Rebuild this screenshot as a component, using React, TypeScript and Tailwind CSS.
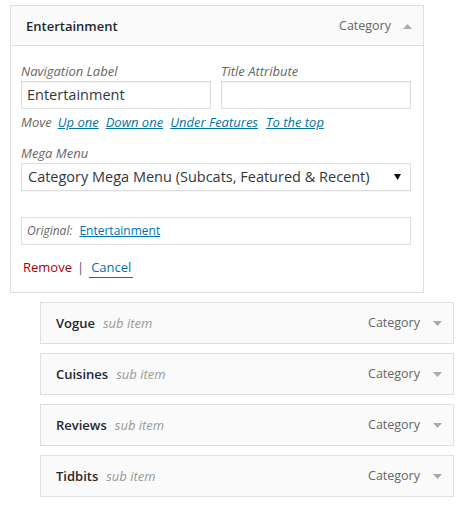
import React from "react";

const font = { fontFamily: '"Open Sans", "Noto Sans", sans-serif' };

function Arrow({ up }: { up?: boolean }) {
  return (
    <svg width="9" height="5" viewBox="0 0 9 5" className="shrink-0">
      {up ? <polygon points="0,5 9,5 4.5,0" fill="#aaaaaa" /> : <polygon points="0,0 9,0 4.5,5" fill="#aaaaaa" />}
    </svg>
  );
}

function SubItem({ title }: { title: string }) {
  return (
    <div className="ml-[40px] w-[414px] h-[42px] border border-[#dfdfdf] bg-[#fafafa] flex items-center pt-[1px] pl-[15px] pr-[10px]">
      <span className="text-[13px] font-semibold text-[#23282d]">{title}</span>
      <span className="ml-[8px] text-[13px] italic text-[#999]">sub item</span>
      <span className="ml-auto text-[12.5px] text-[#666]">Category</span>
      <span className="ml-[13px] mr-[1px]"><Arrow /></span>
    </div>
  );
}

export default function App() {
  return (
    <div style={font} className="w-[466px] h-[505px] bg-white pt-[5px]">
      <div className="ml-[10px] w-[414px] border border-[#dfdfdf] bg-white">
        <div className="h-[40px] bg-[#fafafa] border-b border-[#dfdfdf] flex items-center pt-[2px] pl-[15px] pr-[10px]">
          <span className="text-[13px] font-semibold text-[#23282d]">Entertainment</span>
          <span className="ml-auto text-[12.5px] text-[#666]">Category</span>
          <span className="ml-[12px] mr-[1px]"><Arrow up /></span>
        </div>
        <div className="pl-[10px] pr-[12px] pt-[15px] pb-[13px]">
          <div className="flex gap-[10px]">
            <div className="w-[190px]">
              <div className="text-[13px] italic text-[#666] leading-[18px] pt-[1px]">Navigation Label</div>
              <div className="mt-[1px] h-[28px] border border-[#ddd] shadow-[inset_0_1px_2px_rgba(0,0,0,0.07)] flex items-center px-[5px] text-[14.5px] text-[#32373c]">Entertainment</div>
            </div>
            <div className="w-[190px]">
              <div className="text-[13px] italic text-[#666] leading-[18px] pt-[1px]">Title Attribute</div>
              <div className="mt-[1px] h-[28px] border border-[#ddd] shadow-[inset_0_1px_2px_rgba(0,0,0,0.07)]"></div>
            </div>
          </div>
          <div className="mt-[4px] h-[20px] flex items-center text-[13px] italic">
            <span className="text-[#666]">Move</span>
            <a className="ml-[6px] text-[#0073aa] underline">Up one</a>
            <a className="ml-[7px] text-[#0073aa] underline">Down one</a>
            <a className="ml-[7px] text-[#0073aa] underline">Under Features</a>
            <a className="ml-[8px] text-[#0073aa] underline">To the top</a>
          </div>
          <div className="mt-[10px] text-[13px] italic text-[#666] leading-[18px] pt-[1px]">Mega Menu</div>
          <div className="mt-[1px] h-[28px] border border-[#ddd] shadow-[0_1px_1px_rgba(0,0,0,0.04)] flex items-center pl-[6px] pr-[9px] text-[14.5px] text-[#32373c]">
            <span>Category Mega Menu (Subcats, Featured &amp; Recent)</span>
            <svg width="7" height="6" viewBox="0 0 7 6" className="ml-auto"><polygon points="0,0 7,0 3.5,6" fill="#111" /></svg>
          </div>
          <div className="mt-[26px] h-[28px] border border-[#ddd] flex items-center pl-[5px] text-[12px]">
            <span className="italic text-[#666]">Original:</span>
            <a className="ml-[7px] text-[#0073aa] underline">Entertainment</a>
          </div>
          <div className="mt-[12px] h-[22px] flex items-center text-[13px]">
            <span className="ml-[2px] text-[#a00]">Remove</span>
            <span className="mx-[5px] text-[#555]">|</span>
            <a className="text-[#0073aa] border-b border-[#0073aa] pb-[1px] px-[2px] leading-[18px]">Cancel</a>
          </div>
        </div>
      </div>
      <div className="mt-[9px] flex flex-col gap-[9px]">
        <SubItem title="Vogue" />
        <SubItem title="Cuisines" />
        <SubItem title="Reviews" />
        <SubItem title="Tidbits" />
      </div>
    </div>
  );
}
